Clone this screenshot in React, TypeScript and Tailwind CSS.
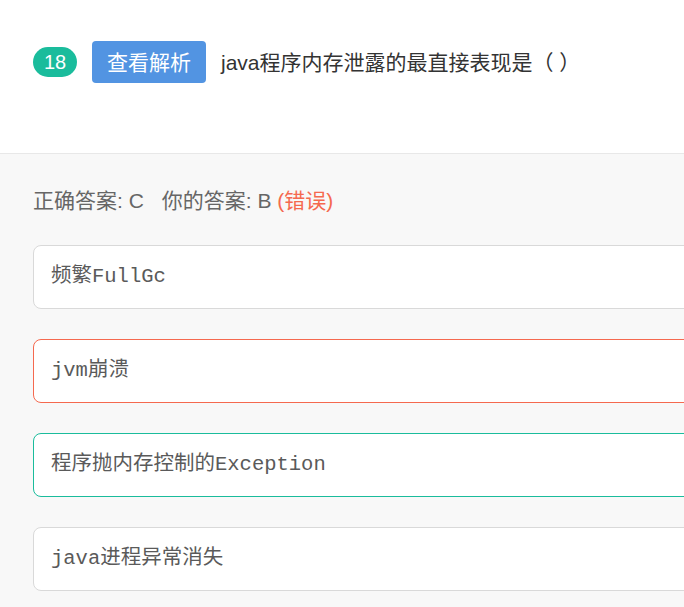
const options = [
  { text: "频繁FullGc", border: "border-[#d9d9d9]" },
  { text: "jvm崩溃", border: "border-[#f5694f]" },
  { text: "程序抛内存控制的Exception", border: "border-[#1abc9c]" },
  { text: "java进程异常消失", border: "border-[#d9d9d9]" },
];

const App = () => {
  return (
    <div className="w-[684px] h-[607px] overflow-hidden bg-white font-['Liberation_Sans','Noto_Sans_CJK_SC',sans-serif]">
      <div className="w-[1100px]">
        <div className="h-[154px] border-b border-[#e8e8e8] pt-[41px] pl-[33px]">
          <div className="flex items-center">
            <span className="flex items-center justify-center w-[44px] h-[30px] rounded-full bg-[#1abc9c] text-white text-[20px] leading-none">
              18
            </span>
            <button className="ml-[15px] w-[114px] h-[42px] rounded-[4px] bg-[#5294e2] text-white text-[21px] leading-none">
              查看解析
            </button>
            <span className="ml-[15px] text-[21px] text-[#333] leading-none">
              java程序内存泄露的最直接表现是（ ）
            </span>
          </div>
        </div>

        <div className="bg-[#f8f8f8] pt-[32px] pl-[33px] h-[500px]">
          <p className="text-[21px] leading-[30px] text-[#666]">
            <span className="mr-[18px]">正确答案: C</span>
            <span>你的答案: B </span>
            <span className="text-[#f5694f]">(错误)</span>
          </p>

          <div className="mt-[29px] flex flex-col gap-[30px]">
            {options.map((o) => (
              <div
                key={o.text}
                className={`h-[64px] flex items-center pl-[17px] bg-white border rounded-[8px] ${o.border}`}
              >
                <span className="text-[20.5px] text-[#5a5a5a] font-['Liberation_Mono','Noto_Sans_CJK_SC',monospace]">
                  {o.text}
                </span>
              </div>
            ))}
          </div>
        </div>
      </div>
    </div>
  );
};

export default App;
